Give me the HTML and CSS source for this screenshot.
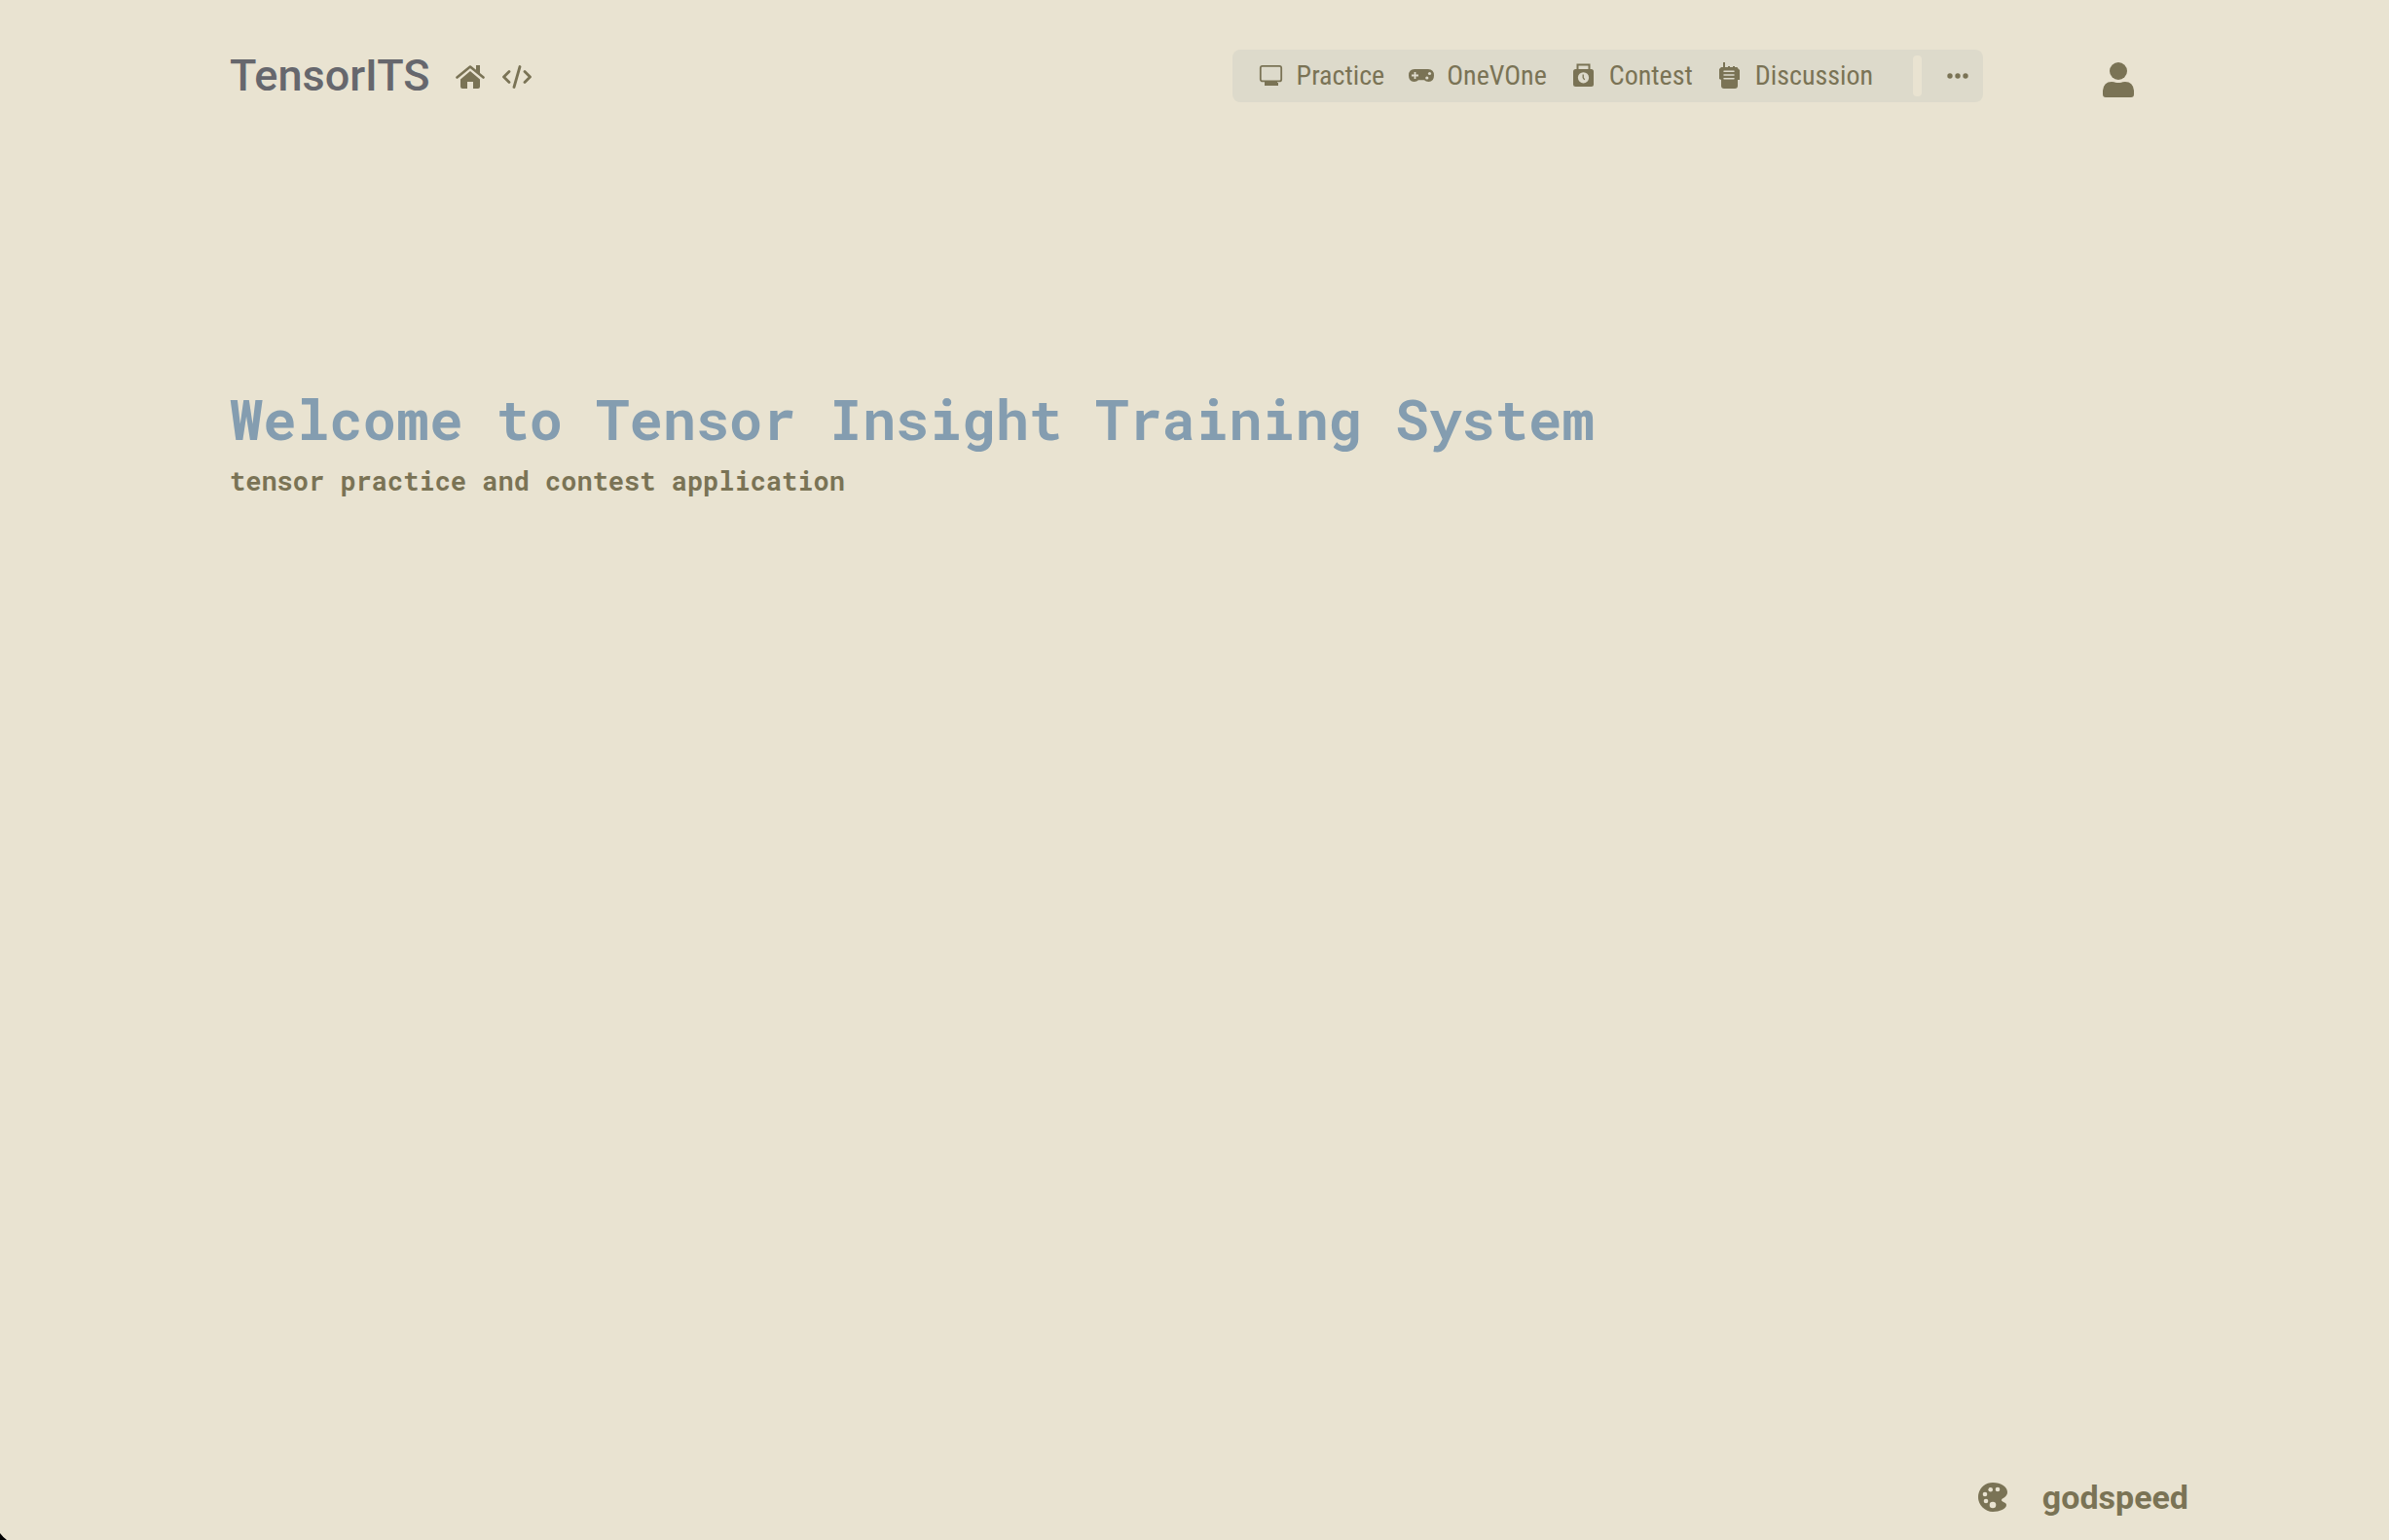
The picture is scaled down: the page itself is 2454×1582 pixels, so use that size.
FILE: index.html
```html
<!DOCTYPE html>
<html lang="en">
<head>
<meta charset="utf-8">
<meta name="viewport" content="width=device-width, initial-scale=1">
<title>TensorITS</title>
<link rel="stylesheet" href="styles.css">
</head>
<body>
<header class="header">
  <div class="identity">
    <a class="brand" href="#">TensorITS</a>
    <a class="icon-link" href="#" aria-label="Home">
      <svg class="icon-large" viewBox="0 0 30 24" fill="currentColor"><path d="M15 6 25 14.500V22q0 2-2 2h-5v-7h-6v7H7q-2 0-2-2v-7.500z"/><path d="M1.500 12.500 15 1.500 28.500 12.500" fill="none" stroke="#e9e3d1" stroke-width="5.500"/><path d="M1.500 12.500 15 1.500 28.500 12.500" fill="none" stroke="currentColor" stroke-width="2.600" stroke-linecap="round" stroke-linejoin="round"/><path d="M21 0h4v9l-4-3.500z"/></svg>
    </a>
    <a class="icon-link" href="#" aria-label="Code">
      <svg class="icon-large" viewBox="0 0 30 24" fill="none" stroke="currentColor" stroke-width="2.800" stroke-linecap="round" stroke-linejoin="round"><path d="M7 6.500 1.500 12 7 17.500M23 6.500 28.500 12 23 17.500M18 1.500 12 22.500"/></svg>
    </a>
  </div>
  <div class="actions">
    <nav class="nav" aria-label="Main">
      <a class="nav-link" href="#"><svg class="icon" viewBox="0 0 28 28" fill="currentColor"><rect x="2.800" y="3.800" width="21.400" height="15.600" rx="2" fill="none" stroke="currentColor" stroke-width="1.800"/><path d="M7 19h13v2h1v3H7v-3z"/></svg>Practice</a>
      <a class="nav-link" href="#"><svg class="icon" viewBox="0 0 28 28"><path fill="currentColor" d="M7 7h14q6 0 6 6.500T21.500 20q-3 0-4.500-1.800h-6Q9.500 20 6.500 20 1 20 1 13.500T7 7z"/><path d="M7.500 10v7M4 13.500h7" stroke="#dddacb" stroke-width="1.800"/><circle cx="22.500" cy="11.500" r="1.600" fill="#dddacb"/><circle cx="19.800" cy="16" r="1.600" fill="#dddacb"/></svg>OneVOne</a>
      <a class="nav-link" href="#"><svg class="icon" viewBox="0 0 28 28"><path fill="none" stroke="currentColor" stroke-width="2" d="M7.500 8V2.500h12V8"/><rect x="3" y="7" width="21" height="18" rx="2.500" fill="currentColor"/><circle cx="13.500" cy="15.800" r="5.600" fill="#dddacb"/><path d="M13.200 12.500v3.300l1.500 2" fill="none" stroke="currentColor" stroke-width="1.300"/></svg>Contest</a>
      <a class="nav-link" href="#"><svg class="icon" viewBox="0 0 28 28"><path fill="currentColor" d="M7 0h2v5h3V4h2v1h3V4h2v1h2q1 0 1 1l2 2v10h-2v6q0 3-3 3H8q-3 0-3-3v-6L3 17V7l2-2h2z"/><path d="M8 9.300h10M8 13h10M8 16.800h10" stroke="#dddacb" stroke-width="1.500" stroke-linecap="round"/></svg>Discussion</a>
      <span class="divider"></span>
      <button class="more" type="button" aria-label="More"><svg class="dots" viewBox="0 0 22 6" fill="currentColor"><circle cx="3" cy="3" r="2.700"/><circle cx="11" cy="3" r="2.700"/><circle cx="19" cy="3" r="2.700"/></svg></button>
    </nav>
    <button class="account" type="button" aria-label="Account"><svg class="person" viewBox="0 0 32 36" fill="currentColor"><circle cx="16" cy="9" r="9"/><path d="M0 33V29q1-9 9-9 3 0 4 .700 3 .800 6 0 1-.700 4-.700 8 0 9 9v4q0 3-3 3H3q-3 0-3-3z"/></svg></button>
  </div>
</header>
<main class="welcome">
  <h1 class="title">Welcome to Tensor Insight Training System</h1>
  <p class="tagline">tensor practice and contest application</p>
</main>
<footer class="footer">
  <button class="theme" type="button"><svg class="palette" viewBox="0 0 30 30"><path fill="currentColor" d="M15 0C6 0 0 7 0 15s7 15 15 15c7 0 14-3 14-7 0-3-5-3-5-5s6-3 6-8C30 4 23 0 15 0z"/><g fill="#e9e3d1"><circle cx="7" cy="12" r="2.300"/><circle cx="12.700" cy="7.200" r="2.300"/><circle cx="20" cy="7" r="2.300"/><circle cx="8" cy="19" r="2.300"/><circle cx="15" cy="23" r="3.300"/></g></svg>godspeed</button>
</footer>
<svg class="corner" viewBox="0 0 8 8" aria-hidden="true"><path d="M0 1Q3 5 7 8H0z" fill="#000"/></svg>
</body>
</html>
```
FILE: styles.css
```css
* {
  box-sizing: border-box;
}

body {
  margin: 0;
  min-height: 100vh;
  display: flex;
  flex-direction: column;
  background: #e9e3d1;
  color: #7a7355;
  font-family: Roboto, sans-serif;
}

a {
  color: inherit;
  text-decoration: none;
}

button {
  padding: 0;
  border: 0;
  background: none;
  color: inherit;
  font: inherit;
  cursor: pointer;
}

svg {
  display: block;
  flex: none;
}

.header {
  display: flex;
  align-items: center;
  justify-content: space-between;
  padding: 48px 262px 0 236px;
}

.identity,
.actions,
.nav,
.nav-link {
  display: flex;
  align-items: center;
}

.identity {
  gap: 18px;
}

.icon-link {
  padding-top: 2px;
}

.brand {
  margin-right: 8px;
  color: #66676d;
  font-size: 45px;
  font-weight: 500;
  line-height: 60px;
}

.icon-large {
  width: 30px;
  height: 24px;
}

.actions {
  gap: 123px;
}

.nav {
  gap: 24px;
  height: 54px;
  padding: 0 15px 0 26px;
  border-radius: 8px;
  background: #dddacb;
}

.nav-link {
  gap: 12px;
  font-family: "Saira Semi Condensed", "Roboto Condensed", "Liberation Sans Narrow", Roboto, sans-serif;
  font-size: 28px;
  line-height: 36px;
}

.icon {
  width: 28px;
  height: 28px;
}

.divider {
  width: 9px;
  height: 42px;
  margin: 0 2px 0 17px;
  border-radius: 4px;
  background: #e9e3d1;
}

.dots {
  width: 22px;
  height: 6px;
}

.person {
  width: 32px;
  height: 36px;
}

.account {
  padding-top: 8px;
}

.welcome {
  flex: 1;
  padding: 286px 236px 0;
  font-family: "Roboto Mono", "DejaVu Sans Mono", monospace;
}

.title {
  margin: 0;
  color: #849db0;
  font-size: 57px;
  font-weight: 700;
  line-height: 72px;
}

.tagline {
  margin: 10px 0 0;
  font-size: 27px;
  font-weight: 700;
  line-height: 36px;
}

.footer {
  display: flex;
  justify-content: flex-end;
  padding: 0 206px 22px;
}

.theme {
  display: flex;
  align-items: center;
  gap: 36px;
  font-size: 34px;
  font-weight: 700;
  line-height: 44px;
}

.palette {
  width: 30px;
  height: 30px;
}

.corner {
  position: fixed;
  left: 0;
  bottom: 0;
  width: 8px;
  height: 8px;
}
```
